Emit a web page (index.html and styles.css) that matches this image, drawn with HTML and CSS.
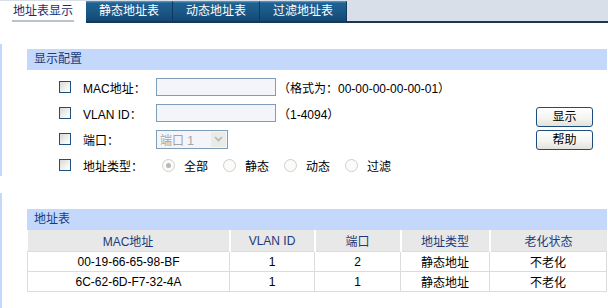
FILE: index.html
```html
<!DOCTYPE html>
<html lang="zh-CN">
  <head>
    <meta charset="UTF-8" />
    <title>地址表显示</title>
    <link rel="stylesheet" href="styles.css">
  </head>
  <body>
    <div class="tabs">
      <div class="tab active"><span>地址表显示</span></div>
      <div class="tab">静态地址表</div>
      <div class="tab">动态地址表</div>
      <div class="tab">过滤地址表</div>
      <div class="tab-fill"></div>
    </div>

    <div class="section first">
      <div class="panel">
        <div class="panel-title">显示配置</div>
        <div class="form">
          <span class="check"></span>
          <span class="label">MAC地址：</span>
          <div class="field">
            <span class="input"></span>
            <span class="hint">（格式为：00-00-00-00-00-01）</span>
          </div>

          <span class="check"></span>
          <span class="label">VLAN ID：</span>
          <div class="field">
            <span class="input"></span>
            <span class="hint">（1-4094）</span>
          </div>

          <span class="check"></span>
          <span class="label">端口：</span>
          <div class="field">
            <span class="select">
              <span class="select-text">端口 1</span>
              <span class="select-btn">
                <svg width="9" height="6" viewBox="0 0 9 6"><path d="M1 1l3.5 3.5L8 1" fill="none" stroke="#b4b4b4" stroke-width="1.6"/></svg>
              </span>
            </span>
          </div>

          <span class="check"></span>
          <span class="label">地址类型：</span>
          <div class="field radios">
            <span class="radio on"></span><span class="radio-label">全部</span>
            <span class="radio"></span><span class="radio-label">静态</span>
            <span class="radio"></span><span class="radio-label">动态</span>
            <span class="radio"></span><span class="radio-label">过滤</span>
          </div>

          <div class="buttons">
            <span class="btn">显示</span>
            <span class="btn">帮助</span>
          </div>
        </div>
      </div>
    </div>

    <div class="section second">
      <div class="panel">
        <div class="panel-title">地址表</div>
        <table class="addr-table">
          <thead>
            <tr>
              <th class="c-mac">MAC地址</th>
              <th class="c-vlan">VLAN ID</th>
              <th class="c-port">端口</th>
              <th class="c-type">地址类型</th>
              <th class="c-age">老化状态</th>
            </tr>
          </thead>
          <tbody>
            <tr>
              <td>00-19-66-65-98-BF</td>
              <td>1</td>
              <td>2</td>
              <td>静态地址</td>
              <td>不老化</td>
            </tr>
            <tr>
              <td>6C-62-6D-F7-32-4A</td>
              <td>1</td>
              <td>1</td>
              <td>静态地址</td>
              <td>不老化</td>
            </tr>
          </tbody>
        </table>
      </div>
    </div>
  </body>
</html>
```

FILE: styles.css
```css
body {
  margin: 0;
  width: 608px;
  font-family: "Liberation Sans", "Noto Sans CJK SC", sans-serif;
  font-size: 12px;
  color: #000;
  background: #fff;
}
.tabs {
  display: flex;
  align-items: flex-end;
  height: 23px;
  background: #d8dfe9;
}
.tab {
  width: 86px;
  height: 19px;
  line-height: 19px;
  text-align: center;
  color: #fff;
  white-space: nowrap;
  background: linear-gradient(#3a7aa8 0, #1f6192 8%, #1a5785 55%, #134874 100%);
  border-top: 1px solid #5d8fb5;
  border-right: 1px solid #0f3a5c;
  border-bottom: 2px solid #1c3650;
}
.tab.active {
  height: 22px;
  background: #fff;
  color: #1b2f6e;
  border: none;
  line-height: 21px;
}
.tab.active span {
  display: inline-block;
  line-height: 18px;
  border-bottom: 2px solid #b9c3cd;
  padding: 0 1px;
}
.tab-fill {
  flex: 1;
  border-bottom: 2px solid #1c3650;
}
.section {
  border-left: 2px solid #c4d8fc;
}
.section.first {
  margin-top: 21px;
  padding-top: 5px;
  height: 127px;
}
.section.second {
  margin-top: 17px;
  padding-top: 16px;
  height: 99px;
}
.panel {
  margin-left: 25px;
  margin-right: 1px;
}
.panel-title {
  height: 21px;
  line-height: 21px;
  padding-left: 7px;
  background: #c4d8fc;
  color: #1b3a7a;
}
.form {
  display: grid;
  grid-template-columns: 24px 73px 1fr 71px;
  grid-template-rows: repeat(4, 26px);
  align-items: center;
  padding: 4px 0 0 32px;
}
.check {
  grid-column: 1;
  width: 10px;
  height: 10px;
  border: 1px solid #1c5080;
  background: linear-gradient(135deg, #d8d8d4, #f6f6f4 70%, #fff);
}
.label {
  grid-column: 2;
  white-space: nowrap;
}
.field {
  grid-column: 3;
  display: flex;
  align-items: center;
  white-space: nowrap;
}
.input {
  width: 118px;
  height: 16px;
  border: 1px solid #7f9db9;
  background: #f3f5fa;
}
.hint {
  margin-left: 2px;
}
.select {
  display: flex;
  align-items: center;
  justify-content: space-between;
  width: 70px;
  height: 17px;
  border: 1px solid #7f9db9;
  background: #f3f5fa;
}
.select-text {
  color: #a4a4a4;
  padding-left: 3px;
}
.select-btn {
  display: flex;
  align-items: center;
  justify-content: center;
  width: 15px;
  height: 15px;
  margin-right: 1px;
  background: #ebebe6;
  border-radius: 1px;
}
.radios {
  padding-left: 6px;
}
.radio {
  flex: none;
  width: 11px;
  height: 11px;
  border: 1px solid #cfcfcc;
  border-radius: 50%;
  background: #fbfbfa;
  display: flex;
  align-items: center;
  justify-content: center;
}
.radio.on::after {
  content: "";
  width: 5px;
  height: 5px;
  border-radius: 50%;
  background: #b8b8b8;
}
.radio-label {
  margin: 0 15px 0 9px;
}
.buttons {
  grid-column: 4;
  grid-row: 2 / 4;
  align-self: start;
  display: flex;
  flex-direction: column;
  gap: 3px;
  padding-top: 7px;
}
.btn {
  width: 55px;
  height: 18px;
  line-height: 18px;
  text-align: center;
  border: 1px solid #1d4e7e;
  border-radius: 3px;
  background: linear-gradient(#ffffff, #f3f3ef 60%, #e3e3dc);
}
.addr-table {
  width: 580px;
  border-collapse: collapse;
  table-layout: fixed;
  text-align: center;
}
.addr-table th {
  height: 21px;
  padding: 0;
  font-weight: normal;
  color: #1b3a7a;
  background: #e8e8e8;
  border-right: 2px solid #fff;
}
.addr-table th:last-child {
  border-right: none;
}
.addr-table td {
  height: 19px;
  padding: 0;
  border: 1px solid #dcdcdc;
}
.c-mac { width: 201px; }
.c-vlan { width: 83px; }
.c-port { width: 84px; }
.c-type { width: 87px; }
```
